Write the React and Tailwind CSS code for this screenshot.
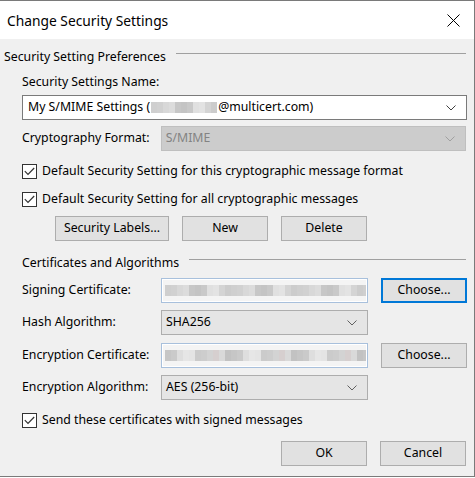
import React from "react";

const font = { fontFamily: '"Noto Sans", "Open Sans", sans-serif' };

function Chevron({ className = "stroke-[#606060]" }) {
  return (
    <svg width="10" height="6" viewBox="0 0 10 6" className={className} fill="none">
      <path d="M0.5 0.5 L5 5 L9.5 0.5" strokeWidth="1" />
    </svg>
  );
}

function Check() {
  return (
    <div className="w-[15px] h-[15px] border border-[#333] bg-white flex items-center justify-center shrink-0">
      <svg width="11" height="9" viewBox="0 0 11 9" fill="none" className="stroke-[#333]">
        <path d="M0.8 4.2 L4 7.4 L10.2 1" strokeWidth="1.2" />
      </svg>
    </div>
  );
}

// pixelated blur of redacted text
const shadesA = ["bg-[#d4d4d4]", "bg-[#c9c9c9]", "bg-[#dcdcdc]", "bg-[#cfcfcf]", "bg-[#e3e3e3]", "bg-[#c4c4c4]", "bg-[#d8d8d8]", "bg-[#cccccc]", "bg-[#e0e0e0]", "bg-[#c7c7c7]", "bg-[#d1d1d1]"];
const shadesB = ["bg-[#d9d9d9]", "bg-[#cdcdcd]", "bg-[#e6e6e6]", "bg-[#c6c6c6]", "bg-[#d6cfcf]", "bg-[#cbcbcb]", "bg-[#dedede]", "bg-[#c2c2c2]", "bg-[#d3d3d3]", "bg-[#e4e4e4]", "bg-[#cacaca]"];

function Blur({ count, shades }) {
  return (
    <div className="flex h-[11px] blur-[0.6px]">
      {Array.from({ length: count }).map((_, i) => (
        <div key={i} className={`w-[6px] h-full ${shades[(i * 7 + 3) % shades.length]}`} />
      ))}
    </div>
  );
}

function Button({ children, w = "w-[86px]", focused = false }) {
  return (
    <div
      className={`${w} h-[25px] bg-[#e1e1e1] flex items-center justify-center text-[12.3px] text-black shrink-0 ${
        focused ? "border-2 border-[#0078d7]" : "border border-[#adadad]"
      }`}
    >
      {children}
    </div>
  );
}

function Select({ children, w = "w-[207px]" }) {
  return (
    <div className={`${w} h-[25px] bg-[#e5e5e5] border border-[#adadad] flex items-center justify-between pl-[4px] pr-[10px] text-[12.3px]`}>
      <span>{children}</span>
      <Chevron />
    </div>
  );
}

function ReadOnly({ shades }) {
  return (
    <div className="w-[207px] h-[25px] border border-[#a8c0dc] bg-white p-[1px]">
      <div className="h-full bg-[#f4f4f4] flex items-center pl-[2px] overflow-hidden">
        <Blur count={34} shades={shades} />
      </div>
    </div>
  );
}

function Row({ label, children }) {
  return (
    <div className="flex items-center">
      <div className="w-[139px] text-[12.3px]">{label}</div>
      {children}
    </div>
  );
}

function GroupHeader({ title, pl = "pl-[4px]" }) {
  return (
    <div className={`flex h-[20px] ${pl} pr-[8px]`}>
      <span className="text-[12.3px] leading-[20px]">{title}</span>
      <div className="flex-1 h-px bg-[#a0a0a0] mt-[6px] ml-[10px]" />
    </div>
  );
}

export default function App() {
  return (
    <div className="w-[475px] h-[478px] bg-white text-black" style={font}>
      <div className="w-[475px] h-[477px] border-t border-r border-b border-[#7a7a7a] flex flex-col">
        <div className="h-[38px] bg-white flex items-center justify-between pl-[7px] pr-[14px] shrink-0">
          <span className="text-[13.8px] mt-[2px]">Change Security Settings</span>
          <svg width="13" height="13" viewBox="0 0 13 13" className="stroke-black" fill="none">
            <path d="M0.5 0.5 L12.5 12.5 M12.5 0.5 L0.5 12.5" strokeWidth="1" />
          </svg>
        </div>

        <div className="flex-1 bg-[#f0f0f0] flex flex-col">
          <div className="mt-[8px]">
            <GroupHeader title="Security Setting Preferences" />
          </div>

          <div className="pl-[22px] pr-[8px] flex flex-col">
            <div className="mt-[5px] h-[20px] text-[12.3px] leading-[20px]">Security Settings Name:</div>

            <div className="mt-[3px] w-[445px] h-[25px] bg-white border border-[#7a7a7a] flex items-center justify-between pl-[5px] pr-[10px] text-[12.3px]">
              <span className="flex items-center">
                My S/MIME Settings (
                <span className="inline-flex mx-[1px]">
                  <Blur count={11} shades={shadesA} />
                </span>
                @multicert.com)
              </span>
              <Chevron className="stroke-[#404040]" />
            </div>

            <div className="mt-[6px]">
              <Row label="Cryptography Format:">
                <div className="w-[306px] h-[25px] bg-[#cccccc] border border-[#bfbfbf] flex items-center justify-between pl-[4px] pr-[10px] text-[12.3px] text-[#838383]">
                  <span>S/MIME</span>
                  <Chevron className="stroke-[#a0a0a0]" />
                </div>
              </Row>
            </div>

            <div className="mt-[10px] h-[20px] flex items-center gap-[5px] text-[12.3px]">
              <Check />
              <span>Default Security Setting for this cryptographic message format</span>
            </div>
            <div className="mt-[8px] h-[20px] flex items-center gap-[5px] text-[12.3px]">
              <Check />
              <span>Default Security Setting for all cryptographic messages</span>
            </div>

            <div className="mt-[7px] flex pl-[33px] gap-[13px]">
              <Button w="w-[114px]">Security Labels...</Button>
              <Button>New</Button>
              <Button>Delete</Button>
            </div>
          </div>

          <div className="mt-[12px]">
            <GroupHeader title="Certificates and Algorithms" pl="pl-[22px]" />
          </div>

          <div className="pl-[22px] pr-[8px] flex flex-col">
            <div className="mt-[5px] flex items-center gap-[13px]">
              <Row label="Signing Certificate:">
                <ReadOnly shades={shadesA} />
              </Row>
              <Button focused>Choose...</Button>
            </div>
            <div className="mt-[7px]">
              <Row label="Hash Algorithm:">
                <Select>SHA256</Select>
              </Row>
            </div>
            <div className="mt-[8px] flex items-center gap-[13px]">
              <Row label="Encryption Certificate:">
                <ReadOnly shades={shadesB} />
              </Row>
              <Button>Choose...</Button>
            </div>
            <div className="mt-[7px]">
              <Row label="Encryption Algorithm:">
                <Select>AES (256-bit)</Select>
              </Row>
            </div>

            <div className="mt-[10px] h-[20px] flex items-center gap-[5px] text-[12.3px]">
              <Check />
              <span>Send these certificates with signed messages</span>
            </div>

            <div className="mt-[11px] flex justify-end gap-[13px]">
              <Button>OK</Button>
              <Button>Cancel</Button>
            </div>
          </div>
        </div>
      </div>
    </div>
  );
}
